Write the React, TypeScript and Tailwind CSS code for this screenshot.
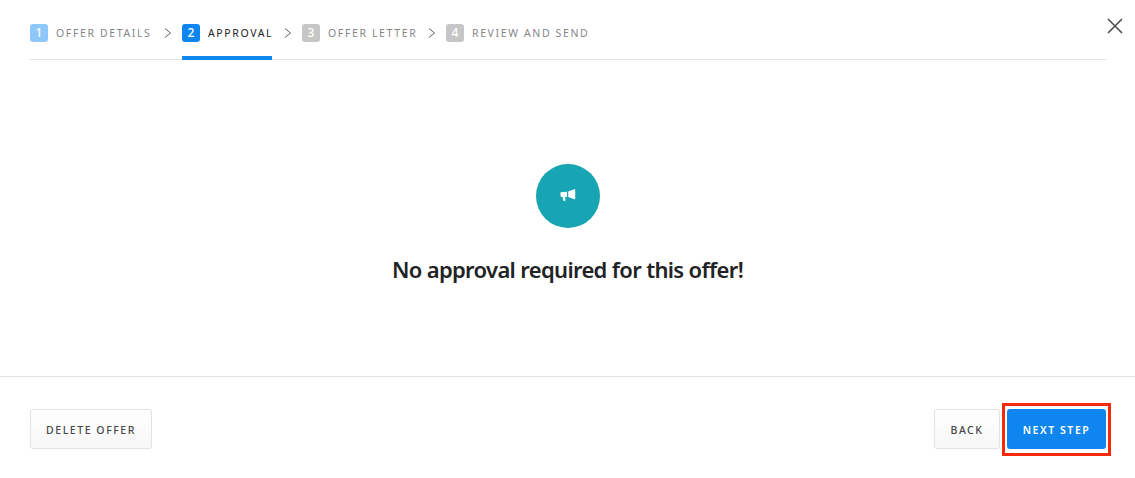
const FONT = { fontFamily: '"Noto Sans", sans-serif' };

const steps = [
  { n: 1, label: "OFFER DETAILS", badge: "bg-[#8ec8fb]", text: "w-[96px] text-[#85878a]" },
  { n: 2, label: "APPROVAL", badge: "bg-[#0f86ef]", text: "w-[64px] text-[#222427]", active: true },
  { n: 3, label: "OFFER LETTER", badge: "bg-[#c6c6c6]", text: "w-[88px] text-[#85878a]" },
  { n: 4, label: "REVIEW AND SEND", badge: "bg-[#c6c6c6]", text: "w-[118px] text-[#85878a]" },
];

function Megaphone() {
  return (
    <svg width="16" height="13" viewBox="0 0 16 13" fill="#fff" className="mb-[1px]">
      <path d="M0.5 3.2 L7 2.8 L7 8 L5 8 L5.6 11.6 L3.4 12 L2.6 8 L1.4 7.8 Q0.5 7.5 0.5 6.8 Z" />
      <path d="M8.2 2.6 L14.4 0.3 L15.2 0.3 L15.2 10.2 L14.4 10.2 L8.2 8 Z" />
    </svg>
  );
}

function Chevron() {
  return (
    <svg width="16" height="10" viewBox="0 0 16 10" fill="none" className="mt-[28px] mr-[6px] ml-[8px]">
      <path d="M5 0.5 L10.5 5 L5 9.5" stroke="#5c5e61" strokeWidth="1" />
    </svg>
  );
}

function CloseIcon() {
  return (
    <svg width="16" height="16" viewBox="0 0 16 16" fill="none">
      <path d="M1 1 L15 15 M15 1 L1 15" stroke="#4a4c4f" strokeWidth="1.6" />
    </svg>
  );
}

export default function App() {
  return (
    <div className="flex h-[478px] w-[1135px] flex-col bg-white" style={FONT}>
      {/* Stepper */}
      <div className="relative mr-[29px] ml-[30px] flex h-[60px] border-b border-[#e2e2e2]">
        {steps.map((s, i) => (
          <div key={s.n} className="flex items-start">
            <div
              className={`flex h-[60px] items-start gap-[8px] pt-[24px] ${
                s.active ? "border-b-4 border-[#0f86ef]" : ""
              }`}
            >
              <span
                className={`flex h-[18px] w-[18px] items-center justify-center rounded-[3px] text-[12px] font-medium text-white ${s.badge}`}
              >
                {s.n}
              </span>
              <span className={`whitespace-nowrap text-[10.5px] leading-[18px] tracking-[0.155em] ${s.text}`}>
                {s.label}
              </span>
            </div>
            {i < steps.length - 1 && <Chevron />}
          </div>
        ))}
        <button className="absolute top-[18px] right-[-17px]">
          <CloseIcon />
        </button>
      </div>

      {/* Body */}
      <div className="flex h-[317px] flex-col items-center border-b border-[#e2e2e2] pt-[104px]">
        <div className="flex h-[64px] w-[64px] items-center justify-center rounded-full bg-[#18a5b3]">
          <Megaphone />
        </div>
        <h2 className="mt-[26px] text-[22px] leading-[30px] font-semibold tracking-[-0.03em] text-[#212325]">
          No approval required for this offer!
        </h2>
      </div>

      {/* Footer */}
      <div className="flex items-start justify-between pt-[32px] pr-[29px] pl-[30px]">
        <button className="h-[40px] w-[122px] rounded-[3px] border border-[#e2e2e2] bg-gradient-to-b from-white to-[#f7f7f7] pt-[3px] text-[10.5px] font-medium tracking-[0.148em] text-[#45474a]">
          DELETE OFFER
        </button>
        <div className="flex gap-[7px]">
          <button className="h-[40px] w-[66px] rounded-[3px] border border-[#e2e2e2] bg-gradient-to-b from-white to-[#f7f7f7] pt-[3px] text-[10.5px] font-medium tracking-[0.148em] text-[#45474a]">
            BACK
          </button>
          <div className="relative">
            <button className="h-[40px] w-[99px] rounded-[3px] bg-[#0f86ef] pt-[3px] text-[10.5px] font-semibold tracking-[0.148em] text-white">
              NEXT STEP
            </button>
            {/* red annotation box */}
            <span className="pointer-events-none absolute -inset-x-[5px] -top-[6px] -bottom-[7px] border-[3px] border-[#f52a0a]" />
          </div>
        </div>
      </div>
    </div>
  );
}
